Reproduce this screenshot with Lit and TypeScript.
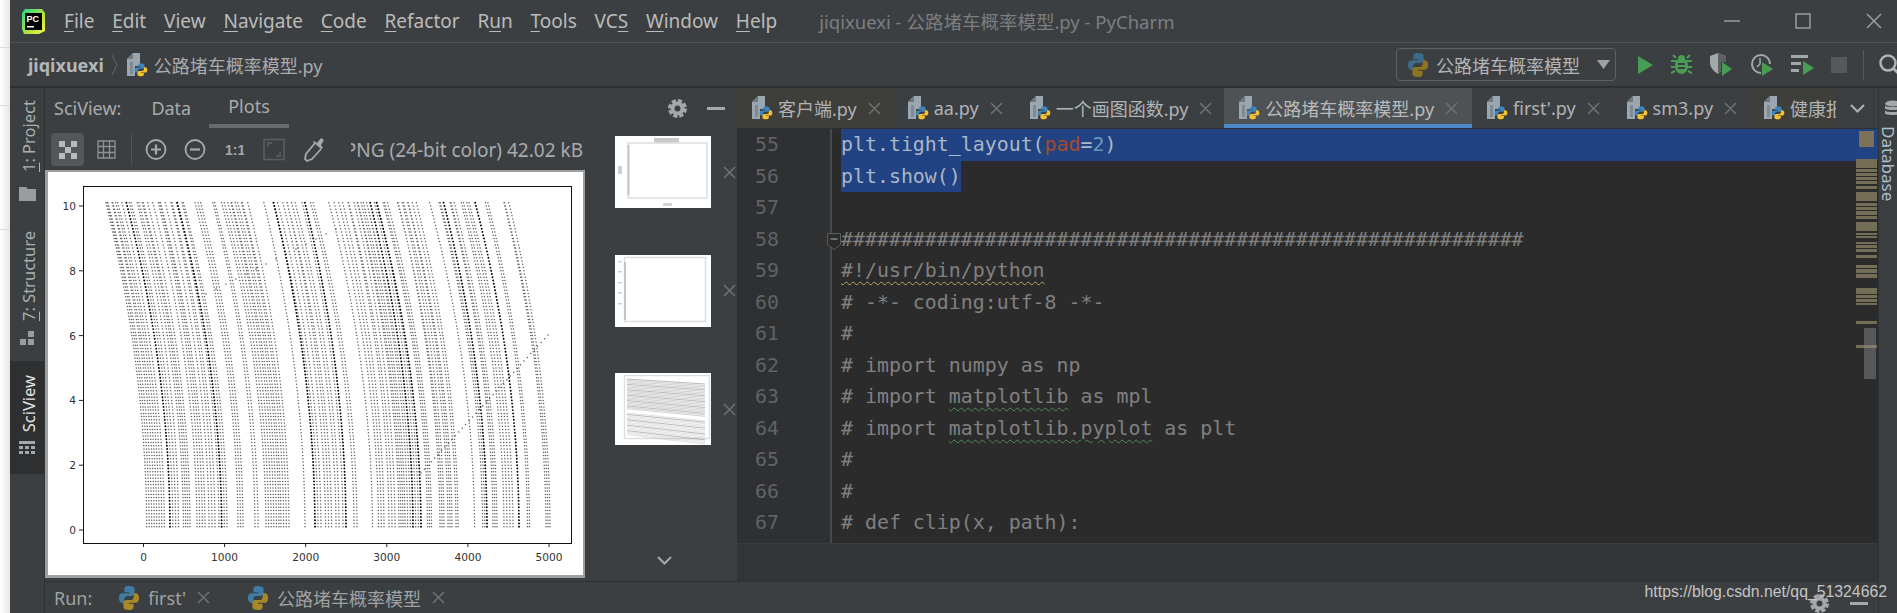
import { LitElement, html, svg, css } from "lit";
import { customElement } from "lit/decorators.js";

const PY_BLUE = "M12 1C7 1 7 3 7 4v2.6h5.2v1H4.6C2.5 7.6 1 9.2 1 12s1.5 4.5 3.6 4.5h2.2v-3c0-2 1.5-3.4 3.4-3.4h4.9c1.7 0 3-1.3 3-3V4c0-2-2-3-6.100-3z";

const logo = (blue: string, yellow: string, x = 0, y = 0, s = 1) => svg`
  <g transform="translate(${x} ${y}) scale(${s})">
    <path d=${PY_BLUE} fill=${blue}/>
    <path d=${PY_BLUE} fill=${yellow} transform="rotate(180 12 12)"/>
  </g>`;

const pyFile = () => html`<svg class="pyfile" width="21" height="24" viewBox="0 0 21 24">
  <path d="M6 0h7v13H8v10H0V6z" fill="#9aa7b0"/>
  <path d="M6 0v6H0z" fill="#6e7a82"/>
  <rect x="3" y="9" width="3" height="12" fill="#7f8b93"/>
  ${logo("#3e86c0", "#f5c12e", 7, 10, 0.58)}
</svg>`;

const pyBig = (dim = false) => html`<svg class="pybig" width="22" height="26" viewBox="0 0 24 24" preserveAspectRatio="none">
  ${dim ? logo("#3c6a88", "#8c7420") : logo("#3e7ba5", "#a8892a")}
</svg>`;

const close = (cls = "x") => html`<svg class=${cls} width="13" height="13" viewBox="0 0 13 13"><path d="M1 1l11 11M12 1L1 12" stroke="#6f7274" stroke-width="1.500" fill="none"/></svg>`;

const playSmall = (x: number, y: number) => svg`<path d="M${x} ${y}l11 7-11 7z" fill="#499c54"/>`;

/* bottom-of-plot x ranges of each column of the scatter, in page pixels */
const COLUMNS: [number, number][] = [
  [145.7, 163.3], [169, 177.5], [182.5, 189], [196, 204], [208, 214], [218, 226], [237, 242], [254, 257],
  [265, 278], [280, 288], [304, 304], [314, 320], [324.5, 330.5], [335, 338], [342, 345], [353, 356],
  [371.5, 371.5], [377.5, 383], [388, 394], [398, 402], [404, 420], [426.5, 430.5], [439, 443], [447, 451],
  [455, 457], [473.5, 473.5], [481.6, 486], [492, 496], [503, 506], [509, 512], [518, 518], [526.500, 528.5], [545, 549],
];

const buildDots = () => {
  let seed = 7;
  const rnd = () => ((seed = (seed * 16807) % 2147483647) / 2147483647);
  let light = "";
  let dark = "";
  COLUMNS.forEach(([a, b]) => {
    const n = Math.max(1, Math.round((b - a) / 2.6) + 1);
    for (let i = 0; i < n; i++) {
      const x0 = a + (n > 1 ? (i * (b - a)) / (n - 1) : 0);
      const bend = 40 + rnd() * 4;
      const isDark = rnd() < 0.14;
      let s = "";
      for (let k = 1; k <= 101; k++) {
        const v = k * 0.1;
        const t = v / 10;
        const x = x0 - bend * Math.pow(t, 1.95);
        s += `M${x.toFixed(1)} ${(529 - 32.4 * v).toFixed(1)}h0`;
      }
      if (isDark) dark += s;
      else light += s;
    }
  });
  let sparse = "";
  const seg = (x1: number, y1: number, x2: number, y2: number, step: number) => {
    const len = Math.hypot(x2 - x1, y2 - y1);
    const c = Math.floor(len / step);
    for (let i = 0; i <= c; i++) {
      sparse += `M${(x1 + ((x2 - x1) * i) / c).toFixed(1)} ${(y1 + ((y2 - y1) * i) / c).toFixed(1)}h0`;
    }
  };
  seg(420, 472, 547, 334, 5);
  seg(205, 293, 335, 228, 11);
  return { light, dark, sparse };
};
const DOTS = buildDots();

const XT = [0, 1000, 2000, 3000, 4000, 5000];
const YT = [0, 2, 4, 6, 8, 10];

const STRIPES: [number, number][] = [
  [158, 167], [168, 171], [172, 175], [176, 179], [180, 183], [185, 188], [191, 200], [202, 205], [206, 209], [210, 214],
  [215, 218], [221, 230], [232, 234], [235, 237], [241, 243], [244, 247], [248, 251], [254, 257], [264, 267], [268, 272],
  [273, 277], [287, 293], [294, 297], [298, 301], [302, 304], [320, 323], [344, 347],
];

const thumbBands = () => {
  const out = [];
  for (let i = 0; i < 40; i++) {
    const y = 6 + i * 1.35 + (i > 22 ? 3 : 0);
    const o = i % 4 === 0 ? 0.5 : i > 22 ? 0.2 : 0.32;
    out.push(svg`<line x1="12" y1=${y} x2="90" y2=${y + 5 + i * 0.12} stroke="#777" stroke-width="1" opacity=${o}/>`);
  }
  return out;
};

@customElement("app-root")
export class AppRoot extends LitElement {
  static styles = css`
    :host { display: flex; width: 1897px; height: 613px; overflow: hidden; background: #3c3f41; color: #afb1b3; font-family: "Noto Sans", "Noto Sans CJK SC", sans-serif; font-size: 18px; }
    svg { display: block; flex: none; }
    .edge { width: 10px; flex: none; background: linear-gradient(#dcdcdc, #dcdcdc) 0 47px / 100% 1px no-repeat, linear-gradient(#dcdcdc, #dcdcdc) 0 105px / 100% 1px no-repeat, linear-gradient(#dcdcdc, #dcdcdc) 0 229px / 100% 1px no-repeat, linear-gradient(90deg, #ffffff, #e6e6e6); }
    .main { flex: 1; min-width: 0; display: flex; flex-direction: column; }

    .title { height: 42px; flex: none; display: flex; align-items: center; padding-left: 12px; border-bottom: 1px solid #505355; }
    .menu { display: flex; gap: 17.8px; margin-left: 19px; color: #bbbbbb; font-size: 19px; line-height: 24px; }
    .menu u { text-underline-offset: 3px; text-decoration-thickness: 1px; }
    .wtitle { margin-left: 42px; color: #7b7e80; font-size: 18.500px; }
    .winbtns { margin-left: auto; display: flex; gap: 55px; padding-right: 15px; align-items: center; }

    .nav { height: 43px; flex: none; display: flex; align-items: center; padding-left: 18px; border-bottom: 2px solid #2d2f30; }
    .crumb { font-weight: 700; color: #b4b6b8; font-size: 18px; }
    .chev { margin: 0 9px 0 7px; }
    .crumbfile { margin-left: 6px; color: #a9abad; font-size: 18px; }
    .right { margin-left: auto; display: flex; align-items: center; }
    .config { width: 220px; height: 33px; box-sizing: border-box; border: 1.5px solid #5e6163; border-radius: 4px; display: flex; align-items: center; padding-left: 10px; gap: 7px; color: #b2b4b6; font-size: 18px; }
    .config .tri { margin-left: 10px; }
    .acts { display: flex; align-items: center; margin-left: 20px; gap: 17px; }
    .vsep { width: 1px; height: 30px; background: #56595b; margin-left: 16px; margin-right: 14px; }
    .search { margin-right: -5px; }

    .body { flex: 1; min-height: 0; display: flex; }
    .strip { width: 34px; flex: none; display: flex; flex-direction: column; border-right: 1px solid #313335; box-sizing: content-box; }
    .tw { display: flex; flex-direction: column; align-items: center; color: #a9afb3; font-size: 16.5px; }
    .tw span { writing-mode: vertical-rl; transform: rotate(180deg); line-height: 20px; white-space: nowrap; margin-left: 3px; }
    .tw u { text-underline-offset: 2px; }
    .tw.a { height: 133px; padding-top: 12px; box-sizing: border-box; gap: 14px; }
    .tw.b { height: 140px; padding-top: 10px; box-sizing: border-box; gap: 10px; }
    .tw.c { height: 113px; padding-top: 14px; box-sizing: border-box; gap: 9px; background: #2d2f30; color: #e3e5e6; }

    .center { flex: 1; min-width: 0; display: flex; flex-direction: column; }
    .work { height: 493px; flex: none; display: flex; border-bottom: 1px solid #2d2f30; }

    .panel { width: 692px; flex: none; display: flex; flex-direction: column; }
    .phead { height: 40px; flex: none; display: flex; align-items: center; padding-left: 9px; color: #a9abad; }
    .ptab { margin-left: 30px; height: 100%; display: flex; align-items: center; }
    .ptab.on { padding: 0 19px; box-sizing: border-box; border-bottom: 4px solid #696c6e; margin-left: 18px; }
    .ptools { margin-left: auto; display: flex; align-items: center; gap: 20px; padding-right: 12px; }
    .pbody { flex: 1; min-height: 0; display: flex; }
    .pleft { width: 540px; flex: none; display: flex; flex-direction: column; }
    .tools { height: 42px; flex: none; display: flex; align-items: flex-start; padding: 5px 0 0 6px; box-sizing: border-box; }
    .tbtn { width: 33px; height: 33px; display: flex; align-items: center; justify-content: center; border-radius: 4px; }
    .tbtn.on { background: #54575a; }
    .tsep { width: 1px; height: 31px; background: #515456; margin: 1px 13px 0 8px; }
    .tools .t2 { margin-left: 6px; }
    .m17 { margin-left: 17px; }
    .m18 { margin-left: 18px; }
    .m19 { margin-left: 18px; }
    .m20 { margin-left: 19px; }
    .tinfo { margin-left: auto; width: 232px; height: 33px; overflow: hidden; display: flex; justify-content: flex-end; align-items: center; white-space: nowrap; color: #a9abad; font-size: 19px; margin-right: 2px; }
    .plot { width: 540px; height: 408px; box-sizing: border-box; background: #fff; border: solid #a0a0a0; border-width: 2px 2px 3px 3px; }
    .plot svg { font-family: "DejaVu Sans", sans-serif; }
    .thumbs { flex: 1; display: flex; flex-direction: column; padding: 8px 0 0 30px; }
    .trow { display: flex; align-items: center; gap: 12px; margin-bottom: 46.500px; }
    .trow .thumb { background: #fff; }
    .more { margin: auto 0 16px 42px; }

    .editor { flex: 1; min-width: 0; display: flex; flex-direction: column; background: #2b2b2b; position: relative; }
    .tabs { height: 41px; flex: none; display: flex; background: #3c3f41; border-bottom: 1px solid #2d2f30; box-sizing: border-box; overflow: hidden; }
    .tab { height: 40px; display: flex; align-items: center; padding: 0 12px 0 15px; flex: none; box-sizing: border-box; font-size: 18px; color: #b1b3b5; white-space: nowrap; }
    .tab .name { margin-left: 5px; margin-right: 11px; }
    .tab.tint { background: #3e3e3a; }
    .tab.act { background: #4e5254; border-bottom: 4px solid #4a88c7; padding: 4px 14px 0 15px; color: #b9bbbd; }
    .tab.cut { width: 87px; overflow: hidden; padding-right: 0; margin-left: auto; }
    .tabmore { width: 42px; flex: none; display: flex; align-items: center; justify-content: center; }
    .code { flex: 1; min-height: 0; display: flex; overflow: hidden; font-family: "DejaVu Sans Mono", monospace; font-size: 19.9px; line-height: 31.5px; }
    .gutter { width: 95px; flex: none; box-sizing: border-box; background: #2f3031; border-right: 2px solid #47494b; padding-left: 18px; color: #606366; position: relative; }
    .fold { position: absolute; left: 90px; top: 104px; }
    .lines { flex: 1; min-width: 0; padding-left: 9px; color: #808080; }
    .line { height: 31.5px; white-space: pre; }
    .sel { background: #214283; color: #a9b7c6; }
    span.sel { display: inline-block; height: 31px; }
    .kw { color: #aa4926; }
    .num { color: #6897bb; }
    .wy { text-decoration: underline wavy #b5a95e 1px; text-underline-offset: 4px; }
    .wg { text-decoration: underline wavy #4f8a4f 1px; text-underline-offset: 4px; }
    .marks { position: absolute; right: 0; top: 41px; }
    .under { height: 38px; flex: none; background: #323435; border-top: 1px solid #3a3c3d; box-sizing: border-box; position: absolute; left: 0; right: 0; bottom: 0; }

    .run { flex: 1; min-height: 0; display: flex; align-items: center; padding-left: 9px; color: #9fa2a4; font-size: 18px; position: relative; }
    .run .py { margin-left: 26px; margin-right: 8px; }
    .run .py.second { margin-left: 37px; }
    .run .x { margin-left: 11px; }
    .mark { position: absolute; right: -9px; top: 1px; font-family: "Liberation Sans", sans-serif; font-size: 15.800px; color: #c4c4c4; white-space: nowrap; }
    .runicons { position: absolute; right: 10px; top: 12px; display: flex; align-items: center; gap: 21px; }

    .dbstrip { width: 19px; flex: none; border-left: 1px solid #313335; box-sizing: border-box; display: flex; flex-direction: column; padding: 12px 0 0 5px; gap: 8px; overflow: hidden; color: #a9c0d0; }
    .dbstrip span { writing-mode: vertical-rl; font-size: 17px; line-height: 18px; white-space: nowrap; }
  `;

  private tab(name: string, cls = "") {
    return html`<div class="tab ${cls}">${pyFile()}<span class="name">${name}</span>${close()}</div>`;
  }

  render() {
    const menu = [["F", "ile"], ["E", "dit"], ["V", "iew"], ["N", "avigate"], ["C", "ode"], ["R", "efactor"]];
    const gear = html`<svg width="19" height="19" viewBox="0 0 19 19"><circle cx="9.500" cy="9.500" r="5" fill="none" stroke="#a5a8aa" stroke-width="4"/><circle cx="9.500" cy="9.500" r="8" fill="none" stroke="#a5a8aa" stroke-width="3" stroke-dasharray="4.300 2"/></svg>`;
    return html`
      <div class="edge"></div>
      <div class="main">
        <div class="title">
          <svg width="23" height="25" viewBox="0 0 23 25">
            <defs><linearGradient id="pcg" x1="0" y1="0" x2="1" y2="1"><stop offset="0" stop-color="#21d789"/><stop offset=".6" stop-color="#b4e33d"/><stop offset="1" stop-color="#fcf84a"/></linearGradient></defs>
            <path d="M3 0h17l3 4v18l-6 3H2l-2-5V4z" fill="url(#pcg)"/>
            <rect x="3" y="4" width="17" height="17" fill="#000"/>
            <text x="4.500" y="12.500" font-family="Liberation Sans" font-weight="700" font-size="9" fill="#fff">PC</text>
            <rect x="5" y="17" width="7" height="1.500" fill="#fff"/>
          </svg>
          <div class="menu">
            ${menu.map(([a, b]) => html`<span><u>${a}</u>${b}</span>`)}
            <span>R<u>u</u>n</span><span><u>T</u>ools</span><span>VC<u>S</u></span><span><u>W</u>indow</span><span><u>H</u>elp</span>
          </div>
          <div class="wtitle">jiqixuexi - 公路堵车概率模型.py - PyCharm</div>
          <div class="winbtns">
            <svg width="16" height="16" viewBox="0 0 16 16"><path d="M0 8h16" stroke="#9b9d9f" stroke-width="1.500"/></svg>
            <svg width="16" height="16" viewBox="0 0 16 16"><rect x="1" y="1" width="14" height="14" fill="none" stroke="#9b9d9f" stroke-width="1.500"/></svg>
            <svg width="16" height="16" viewBox="0 0 16 16"><path d="M1 1l14 14M15 1L1 15" stroke="#9b9d9f" stroke-width="1.500"/></svg>
          </div>
        </div>

        <div class="nav">
          <span class="crumb">jiqixuexi</span>
          <svg class="chev" width="7" height="22" viewBox="0 0 7 22"><path d="M1 1l5 10-5 10" fill="none" stroke="#66696b" stroke-width="1"/></svg>
          ${pyFile()}
          <span class="crumbfile">公路堵车概率模型.py</span>
          <div class="right">
            <div class="config">
              ${pyBig(true)}<span>公路堵车概率模型</span>
              <svg class="tri" width="13" height="9" viewBox="0 0 13 9"><path d="M0 0h13L6.500 9z" fill="#a0a2a4"/></svg>
            </div>
            <div class="acts">
              <svg width="18" height="20" viewBox="0 0 18 20"><path d="M2 1l15 9-15 9z" fill="#499c54"/></svg>
              <svg width="21" height="21" viewBox="0 0 21 21"><g fill="#499c54"><ellipse cx="10.500" cy="12" rx="6.500" ry="8"/><circle cx="10.500" cy="4.500" r="3.500"/></g><g stroke="#499c54" stroke-width="2"><path d="M0 7h21M0 13h21M0 19l4-2M21 19l-4-2M2 1l3 3M19 1l-3 3"/></g><path d="M7 9h7v2H7zM7 13h7v2H7z" fill="#3c3f41"/></svg>
              <svg width="24" height="24" viewBox="0 0 24 24"><path d="M1 3l8-3 8 3v6h-5v9l-3 3c-5-3-8-7-8-12z" fill="#a5a8aa"/><path d="M9 0l8 3v6h-5v9l-3 3z" fill="#5e6163"/><path d="M13 9l10 7-10 7z" fill="#499c54"/></svg>
              <svg width="24" height="24" viewBox="0 0 24 24"><path d="M11 20a9 9 0 1 1 9-9" fill="none" stroke="#a5a8aa" stroke-width="2"/><path d="M10 5v6l-3 3" fill="none" stroke="#a5a8aa" stroke-width="1.500"/>${playSmall(12, 9)}</svg>
              <svg width="23" height="24" viewBox="0 0 23 24"><path d="M0 2h17v3H0zM0 9h10v3H0zM0 16h8v3H0z" fill="#a5a8aa"/>${playSmall(12, 8)}</svg>
              <svg width="16" height="16" viewBox="0 0 16 16"><rect width="16" height="16" fill="#565859"/></svg>
            </div>
            <div class="vsep"></div>
            <svg class="search" width="24" height="24" viewBox="0 0 24 24"><circle cx="10" cy="10" r="7.500" fill="none" stroke="#b0b2b4" stroke-width="2.500"/><path d="M15 15l7 7" stroke="#b0b2b4" stroke-width="3"/></svg>
          </div>
        </div>

        <div class="body">
          <div class="strip">
            <div class="tw a"><span><u>1</u>: Project</span>
              <svg width="17" height="15" viewBox="0 0 17 15"><path d="M0 1h7l2 2h8v12H0z" fill="#9a9c9e"/></svg></div>
            <div class="tw b"><span><u>7</u>: Structure</span>
              <svg width="14" height="14" viewBox="0 0 14 14"><path d="M8 0h6v6H8zM0 8h6v6H0zM8 8h6v6H8z" fill="#9a9c9e"/></svg></div>
            <div class="tw c"><span>SciView</span>
              <svg width="16" height="14" viewBox="0 0 16 14"><path d="M0 0h16v3H0zM0 5h4v3H0zM6 5h4v3H6zM12 5h4v3h-4zM0 10h4v3H0zM6 10h4v3H6zM12 10h4v3h-4z" fill="#a5a8aa"/></svg></div>
          </div>

          <div class="center">
            <div class="work">
              <div class="panel">
                <div class="phead">
                  <span>SciView:</span><span class="ptab">Data</span><span class="ptab on">Plots</span>
                  <div class="ptools">
                    ${gear}
                    <svg width="18" height="3" viewBox="0 0 18 3"><rect width="18" height="3" fill="#a5a8aa"/></svg>
                  </div>
                </div>
                <div class="pbody">
                  <div class="pleft">
                    <div class="tools">
                      <div class="tbtn on"><svg width="18" height="18" viewBox="0 0 18 18"><path d="M0 0h6v6H0zM12 0h6v6h-6zM6 6h6v6H6zM0 12h6v6H0zM12 12h6v6h-6z" fill="#b8babc"/></svg></div>
                      <div class="tbtn t2"><svg width="19" height="19" viewBox="0 0 19 19"><path d="M1 1h17v17H1zM1 6.500h17M1 12.500h17M6.500 1v17M12.500 1v17" fill="none" stroke="#8f9294" stroke-width="1.300"/></svg></div>
                      <div class="tsep"></div>
                      <svg width="22" height="33" viewBox="0 0 22 33"><circle cx="11" cy="16.500" r="9.500" fill="none" stroke="#a5a8aa" stroke-width="1.800"/><path d="M6 16.500h10M11 11.500v10" stroke="#a5a8aa" stroke-width="2.200"/></svg>
                      <svg class="m17" width="22" height="33" viewBox="0 0 22 33"><circle cx="11" cy="16.500" r="9.500" fill="none" stroke="#a5a8aa" stroke-width="1.800"/><path d="M6 16.500h10" stroke="#a5a8aa" stroke-width="2.200"/></svg>
                      <svg class="m19" width="20" height="33" viewBox="0 0 20 33"><text x="1" y="22" font-family="Liberation Sans" font-weight="700" font-size="14" fill="#a5a8aa">1:1</text></svg>
                      <svg class="m20" width="22" height="33" viewBox="0 0 22 33"><rect x="1" y="6.500" width="20" height="20" fill="none" stroke="#5c5f61" stroke-width="1.500"/><path d="M5 14v-4h4M17 19v4h-4" fill="none" stroke="#5c5f61" stroke-width="1.500"/></svg>
                      <svg class="m18" width="22" height="33" viewBox="0 0 22 33"><path d="M12 10l-9 11-1 5 2 2 5-2 9-10" fill="none" stroke="#a5a8aa" stroke-width="1.800"/><path d="M11 8l3 2 4-5 3 2-3 5 2 3-2 1-8-7z" fill="#a5a8aa"/></svg>
                      <div class="tinfo">PNG (24-bit color) 42.02 kB</div>
                    </div>
                    <div class="plot">
                      <svg width="535" height="403" viewBox="47 171 535 403">
                        <path d=${DOTS.light} fill="none" stroke="#222" stroke-width="1.500" stroke-linecap="round" opacity=".72"/>
                        <path d=${DOTS.dark} fill="none" stroke="#000" stroke-width="1.900" stroke-linecap="round"/>
                        <path d=${DOTS.sparse} fill="none" stroke="#555" stroke-width="1.500" stroke-linecap="round"/>
                        <rect x="82.500" y="185.500" width="488" height="357" fill="none" stroke="#111" stroke-width="1"/>
                        ${XT.map((v) => {
                          const x = 142.5 + v * 0.0811;
                          return svg`<line x1=${x} x2=${x} y1="542" y2="546" stroke="#222"/><text x=${x} y="560" text-anchor="middle" font-size="10.600" fill="#333">${v}</text>`;
                        })}
                        ${YT.map((v) => {
                          const y = 529 - v * 32.4;
                          return svg`<line x1="78" x2="82" y1=${y} y2=${y} stroke="#222"/><text x="75" y=${y + 4} text-anchor="end" font-size="10.600" fill="#333">${v}</text>`;
                        })}
                      </svg>
                    </div>
                  </div>
                  <div class="thumbs">
                    <div class="trow">
                      <svg class="thumb" width="96" height="72" viewBox="0 0 96 72">
                        <rect x="39" y="2" width="25" height="5" fill="#c8c8c8"/>
                        <rect x="13" y="7" width="79" height="55" fill="none" stroke="#dedede" stroke-width="1.500"/>
                        <rect x="12.500" y="9" width="2" height="50" fill="#c4c4c4"/>
                        <rect x="3" y="30" width="4" height="8" fill="#cfcfcf"/>
                        <rect x="48" y="67" width="9" height="3" fill="#d4d4d4"/>
                      </svg>${close()}
                    </div>
                    <div class="trow">
                      <svg class="thumb" width="96" height="72" viewBox="0 0 96 72">
                        <rect x="9.500" y="2.500" width="81" height="64" fill="none" stroke="#dedede" stroke-width="1.500"/>
                        <rect x="9" y="7" width="2" height="58" fill="#c4c4c4"/>
                        <rect x="3" y="6" width="4" height="1.500" fill="#cfcfcf"/><rect x="3" y="16" width="4" height="1.500" fill="#cfcfcf"/><rect x="3" y="27" width="4" height="1.500" fill="#cfcfcf"/><rect x="3" y="37" width="4" height="1.500" fill="#cfcfcf"/><rect x="3" y="48" width="4" height="1.500" fill="#cfcfcf"/>
                      </svg>${close()}
                    </div>
                    <div class="trow">
                      <svg class="thumb" width="96" height="72" viewBox="0 0 96 72">
                        <rect x="9.500" y="2.500" width="85" height="63" fill="none" stroke="#dedede" stroke-width="1.500"/>
                        ${thumbBands()}
                      </svg>${close()}
                    </div>
                    <svg class="more" width="15" height="9" viewBox="0 0 15 9"><path d="M1 1l6.500 6.500L14 1" fill="none" stroke="#a5a8aa" stroke-width="2"/></svg>
                  </div>
                </div>
              </div>

              <div class="editor">
                <div class="tabs">
                  ${this.tab("客户端.py", "tint")}${this.tab("aa.py")}${this.tab("一个画图函数.py")}${this.tab("公路堵车概率模型.py", "act")}${this.tab("first'.py")}${this.tab("sm3.py")}
                  <div class="tab tint cut">${pyFile()}<span class="name">健康报告.py</span></div>
                  <div class="tabmore"><svg width="15" height="9" viewBox="0 0 15 9"><path d="M1 1l6.500 6.500L14 1" fill="none" stroke="#b0b2b4" stroke-width="2"/></svg></div>
                </div>
                <div class="code">
                  <div class="gutter">
                    ${Array.from({ length: 13 }, (_, i) => html`<div class="line">${55 + i}</div>`)}
                    <svg class="fold" width="14" height="17" viewBox="0 0 14 17"><path d="M.5.5h13v11L7 16.500.5 11.500z" fill="#2b2b2b" stroke="#5a5d5f"/><path d="M3.500 6h7" stroke="#85888a" stroke-width="1.500"/></svg>
                  </div>
                  <div class="lines">
                    <div class="line sel">plt.tight_layout(<span class="kw">pad</span>=<span class="num">2</span>)</div>
                    <div class="line"><span class="sel">plt.show()</span></div>
                    <div class="line"></div>
                    <div class="line">${"#".repeat(57)}</div>
                    <div class="line"><span class="wy">#!/usr/bin/python</span></div>
                    <div class="line"># -*- coding:utf-8 -*-</div>
                    <div class="line">#</div>
                    <div class="line"># import numpy as np</div>
                    <div class="line"># import <span class="wg">matplotlib</span> as mpl</div>
                    <div class="line"># import <span class="wg">matplotlib.pyplot</span> as plt</div>
                    <div class="line">#</div>
                    <div class="line">#</div>
                    <div class="line"># def clip(x, path):</div>
                  </div>
                </div>
                <svg class="marks" width="22" height="260" viewBox="1856 128 22 260">
                  <rect x="1859" y="130" width="15" height="16" fill="#7b7257"/>
                  ${STRIPES.map(([a, b]) => svg`<rect x="1856" y=${a} width="21" height=${b - a} fill="#756e56"/>`)}
                  <rect x="1864" y="327" width="12" height="51" fill="#8f8f8f" opacity=".45"/>
                </svg>
                <div class="under"></div>
              </div>
            </div>

            <div class="run">
              <span>Run:</span>
              <span class="py">${pyBig()}</span><span>first'</span>${close()}
              <span class="py second">${pyBig()}</span><span>公路堵车概率模型</span>${close()}
              <div class="runicons">
                ${gear}
                <svg width="18" height="3" viewBox="0 0 18 3"><rect width="18" height="3" fill="#a5a8aa"/></svg>
              </div>
              <div class="mark">https://blog.csdn.net/qq_51324662</div>
            </div>
          </div>

          <div class="dbstrip">
            <svg width="18" height="18" viewBox="0 0 18 18"><ellipse cx="9" cy="3.500" rx="8" ry="3" fill="#a5a8aa"/><path d="M1 5.500c1 2 15 2 16 0v3c-1 2-15 2-16 0zM1 10.500c1 2 15 2 16 0v3c-1 2-15 2-16 0z" fill="#a5a8aa"/></svg>
            <span>Database</span>
          </div>
        </div>
      </div>
    `;
  }
}
